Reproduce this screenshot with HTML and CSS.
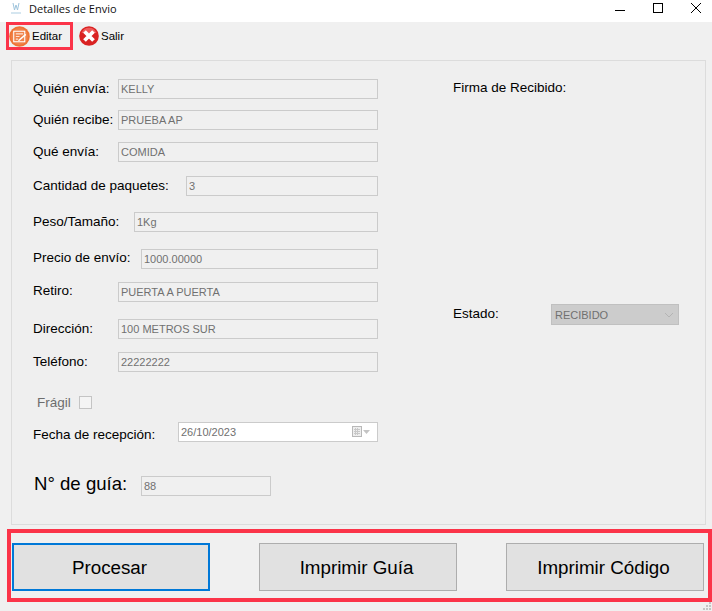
FILE: index.html
```html
<!DOCTYPE html>
<html lang="es">
<head>
<meta charset="utf-8">
<title>Detalles de Envio</title>
<link rel="stylesheet" href="styles.css">
</head>
<body>
<div class="app">
  <header class="titlebar">
    <svg class="appicon" width="16" height="16" viewBox="0 0 16 16"><path d="M5 2l1.500 7 1.500-5 1.500 5 1.500-7" fill="none" stroke="#9fc4dc" stroke-width="1"/><rect x="3" y="11" width="10" height="2" fill="#d5e6f0"/></svg>
    <span class="title">Detalles de Envio</span>
    <div class="winctl">
      <svg width="12" height="12" viewBox="0 0 12 12"><path d="M1 8.500h10" stroke="#000" fill="none"/></svg>
      <svg width="12" height="12" viewBox="0 0 12 12"><rect x="1.500" y="1.500" width="9" height="9" stroke="#000" fill="none"/></svg>
      <svg width="12" height="12" viewBox="0 0 12 12"><path d="M1 1l10 10M11 1L1 11" stroke="#000" fill="none"/></svg>
    </div>
  </header>

  <nav class="toolbar">
    <div class="tool tool-marked">
      <svg width="21" height="21" viewBox="0 0 20 20"><circle cx="10" cy="10" r="9.800" fill="#ee7434"/><circle cx="10" cy="10" r="8" fill="#f0824a"/><rect x="4.500" y="5" width="10.500" height="10" fill="none" stroke="#fff" stroke-width="1"/><path d="M6.500 7.500h7M6.500 10h3.500M6.500 12.500h2" stroke="#fde2d2" stroke-width="1"/><path d="M9 14l7-6" stroke="#fff" stroke-width="1.400"/></svg>
      <span>Editar</span>
    </div>
    <div class="tool">
      <svg width="20" height="20" viewBox="0 0 20 20"><circle cx="10" cy="10" r="9.800" fill="#d92222"/><path d="M2.500 7a8 8 0 0 1 15 0z" fill="#ef5a5a"/><path d="M5.500 5.500l9 9M14.500 5.500l-9 9" stroke="#fff" stroke-width="3.800"/></svg>
      <span>Salir</span>
    </div>
  </nav>

  <main class="group">
    <section class="form">
      <div class="row"><label class="w85">Quién envía:</label><input class="box w260" value="KELLY" disabled></div>
      <div class="row mt11"><label class="w85">Quién recibe:</label><input class="box w260" value="PRUEBA AP" disabled></div>
      <div class="row mt12"><label class="w85">Qué envía:</label><input class="box w260" value="COMIDA" disabled></div>
      <div class="row mt14"><label class="w153">Cantidad de paquetes:</label><input class="box w192" value="3" disabled></div>
      <div class="row mt16"><label class="w101">Peso/Tamaño:</label><input class="box w244" value="1Kg" disabled></div>
      <div class="row mt17"><label class="w108 up">Precio de envío:</label><input class="box w237" value="1000.00000" disabled></div>
      <div class="row mt13"><label class="w85 up">Retiro:</label><input class="box w260" value="PUERTA A PUERTA" disabled></div>
      <div class="row mt17"><label class="w85">Dirección:</label><input class="box w260" value="100 METROS SUR" disabled></div>
      <div class="row mt13"><label class="w85">Teléfono:</label><input class="box w260" value="22222222" disabled></div>
      <div class="row check-row"><span class="fragil">Frágil</span><span class="check"></span></div>
      <div class="row date-row"><label class="w145 down">Fecha de recepción:</label>
        <div class="box date w200"><span>26/10/2023</span>
          <svg width="22" height="14" viewBox="0 0 22 14"><rect x="1.500" y="1.500" width="9" height="10" fill="#eee" stroke="#b8b8b8"/><path d="M3 4.500h6M3 6.500h6M3 8.500h6M4.500 3v7M6.500 3v7" stroke="#c8c8c8"/><path d="M12 5h7l-3.500 4z" fill="#c4c4c4"/></svg>
        </div>
      </div>
      <div class="row guia-row"><label class="guia">N° de guía:</label><input class="box w130" value="88" disabled></div>
    </section>
    <aside class="side">
      <div class="firma">Firma de Recibido:</div>
      <div class="estado"><label>Estado:</label>
        <div class="select"><span>RECIBIDO</span><svg width="10" height="6" viewBox="0 0 10 6"><path d="M1 1l4 4 4-4" fill="none" stroke="#b4b4b4"/></svg></div>
      </div>
    </aside>
  </main>

  <footer class="actions">
    <button class="btn btn-focus">Procesar</button>
    <button class="btn">Imprimir Guía</button>
    <button class="btn">Imprimir Código</button>
  </footer>
  <svg class="grip" width="10" height="10" viewBox="0 0 10 10"><path d="M7 1h2v2H7zM4 4h2v2H4zM7 4h2v2H7zM1 7h2v2H1zM4 7h2v2H4zM7 7h2v2H7z" fill="#c4c4c4"/></svg>
</div>
</body>
</html>
```

FILE: styles.css
```css
* { box-sizing: border-box; }
html, body { margin: 0; padding: 0; }
body { width: 712px; height: 611px; overflow: hidden; background: #f0f0f0; font-family: "Liberation Sans", Arial, sans-serif; color: #000; }
.app { position: relative; width: 712px; height: 611px; display: flex; flex-direction: column; }

.titlebar { height: 22px; background: #fff; display: flex; align-items: center; padding-left: 8px; flex: none; }
.appicon { flex: none; margin-top: -4px; }
.title { margin-left: 5px; margin-top: -5px; font: 11px "Open Sans", sans-serif; color: #111; }
.winctl { margin-left: auto; display: flex; gap: 26px; padding-right: 10px; margin-top: -6px; }
.winctl svg { display: block; }

.toolbar { height: 38px; flex: none; display: flex; align-items: flex-start; padding-left: 6px; }
.tool { display: flex; align-items: center; height: 28px; gap: 2px; font-size: 11.500px; }
.tool-marked { width: 67px; border: 3px solid #fb3449; padding-left: 0; }
.tool:not(.tool-marked) { margin-left: 6px; }

.group { flex: none; margin-left: 11px; width: 695px; height: 465px; border: 1px solid #dcdcdc; display: flex; background: #efefef; padding: 18px 0 0 21px; font-size: 13.500px; }
.form { width: 420px; flex: none; display: flex; flex-direction: column; }
.row { display: flex; align-items: center; height: 20px; flex: none; }
.row label { flex: none; padding-bottom: 2px; }
.box { height: 20px; border: 1px solid #cbcbcb; background: #f0f0f0; color: #707070; font: 11px "Liberation Sans", Arial, sans-serif; padding: 0 2px; margin: 0; opacity: 1; -webkit-text-fill-color: #707070; }
.mt11 { margin-top: 11px; } .mt12 { margin-top: 12px; } .mt13 { margin-top: 13px; }
.mt14 { margin-top: 14px; } .mt16 { margin-top: 16px; } .mt17 { margin-top: 17px; }
.w85 { width: 85px; } .w101 { width: 101px; } .w108 { width: 108px; } .w145 { width: 145px; } .w153 { width: 153px; }
.w130 { width: 130px; } .w192 { width: 192px; } .w200 { width: 200px; } .w237 { width: 237px; } .w244 { width: 244px; } .w260 { width: 260px; }
.row label.up { padding-bottom: 3px; } .row label.down { padding-top: 5px; padding-bottom: 0; }

.check-row { margin-top: 21px; height: 18px; padding-left: 4px; }
.fragil { color: #6d6d6d; width: 42px; }
.check { width: 13px; height: 13px; border: 1px solid #c4c4c4; background: #f4f4f4; }
.date-row { margin-top: 11px; }
.date { background: #fff; display: flex; align-items: center; justify-content: space-between; padding-right: 4px; }
.guia-row { margin-top: 34px; }
.row label.guia { font-size: 18.600px; width: 108px; padding-bottom: 4px; padding-left: 1px; }

.side { display: flex; flex-direction: column; flex: none; }
.firma { margin-top: 1px; }
.estado { display: flex; align-items: center; margin-top: 209px; }
.estado label { width: 98px; padding-bottom: 3px; }
.select { width: 128px; height: 21px; background: #cccccc; border: 1px solid #c0c0c0; color: #707070; font-size: 11px; display: flex; align-items: center; justify-content: space-between; padding: 0 4px 0 3px; }

.actions { flex: none; margin: 4px 0 0 7px; width: 705px; height: 73px; border: 4px solid #fb3449; display: flex; justify-content: space-between; align-items: center; padding: 2px 4px 0 1px; }
.btn { width: 198px; height: 48px; background: #e1e1e1; border: 1px solid #adadad; font: 18.800px "Liberation Sans", Arial, sans-serif; color: #000; padding: 2px 3px 0 0; }
.btn-focus { border: 2px solid #0078d7; }
.grip { position: absolute; right: 0; bottom: 0; }
```
